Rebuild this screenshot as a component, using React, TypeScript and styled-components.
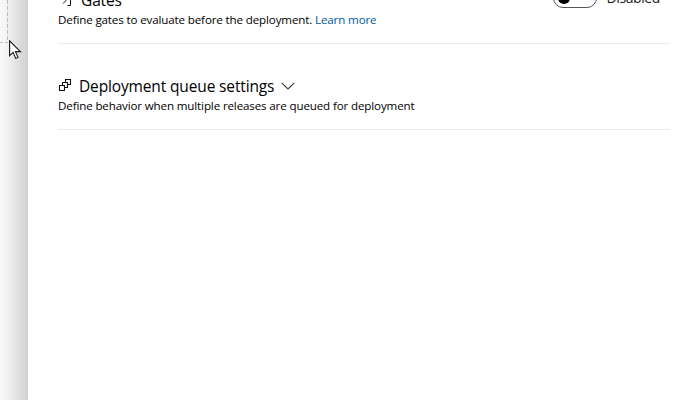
import React from "react";
import styled, { createGlobalStyle } from "styled-components";

const GlobalStyle = createGlobalStyle`
  body { margin: 0; background: #fff; overflow: hidden; }
  * { box-sizing: border-box; }
`;

const Page = styled.div`
  display: flex;
  position: relative;
  width: 696px;
  height: 400px;
  overflow: hidden;
  background: #fff;
  color: #000;
  font-family: "Open Sans", "Noto Sans", sans-serif;
`;

const Canvas = styled.aside`
  flex: 0 0 28px;
  height: 400px;
  background: linear-gradient(90deg, #f8f8f8 0, #f5f5f5 5px, #e8e8e8 13px, #dadada 21px, #d0d0d0 28px);
`;

const Stage = styled.div`
  width: 8px;
  height: 43px;
`;

const Pointer = styled.svg`
  position: absolute;
  left: 9px;
  top: 40px;
`;

const Panel = styled.main`
  flex: 1;
  margin-top: -42px;
  padding: 0 26px 0 30px;
`;

const Section = styled.section`
  height: 86px;
  padding-top: 31px;
  border-bottom: 1px solid #eaeaea;
`;

const Heading = styled.div`
  display: flex;
  align-items: center;
  height: 22px;
`;

const Title = styled.h2<{ $gap: number }>`
  margin: 0 0 0 ${(p) => p.$gap}px;
  font-size: 15.5px;
  line-height: 22px;
  font-weight: 400;
  letter-spacing: -0.14px;
  white-space: nowrap;
`;

const QueueIcon = styled.svg`
  margin-top: -2px;
`;

const Chevron = styled.svg`
  margin-left: 7px;
`;

const Description = styled.p`
  margin: 0;
  font-size: 11.6px;
  line-height: 18px;
  letter-spacing: -0.14px;
  white-space: nowrap;
`;

const Link = styled.a`
  color: #005a9e;
  text-decoration: none;
`;

const ToggleGroup = styled.div`
  display: flex;
  align-items: center;
  margin: -5px 10px 0 auto;
`;

const Toggle = styled.button`
  display: flex;
  align-items: center;
  width: 44px;
  height: 20px;
  margin: 0 10px 0 0;
  padding: 0 4px;
  border: 1px solid #555;
  border-radius: 10px;
  background: #fff;
`;

const Knob = styled.span`
  width: 12px;
  height: 12px;
  border-radius: 50%;
  background: #000;
`;

const ToggleLabel = styled.span`
  font-size: 14px;
  line-height: 20px;
  letter-spacing: -0.4px;
  color: #222;
`;

export default function App() {
  return (
    <Page>
      <GlobalStyle />
      <Canvas>
        <Stage>
          <svg width="8" height="43" fill="none" stroke="#bdbdbd" shapeRendering="crispEdges">
            <path d="M7.5 0V43" strokeDasharray="4 2" />
            <path d="M0 42.5H8" strokeDasharray="3 2" />
          </svg>
        </Stage>
      </Canvas>
      <Panel>
        <Section>
          <Heading>
            <svg width="15" height="16" viewBox="0 0 15 16" fill="none" stroke="#111">
              <path d="M3.5 5V1.5H12.5V13.5H9.5M5 11.5L8 8.5M5 5L8 8.5" />
            </svg>
            <Title $gap={8}>Gates</Title>
            <ToggleGroup>
              <Toggle role="switch" aria-checked="false" aria-label="Gates">
                <Knob />
              </Toggle>
              <ToggleLabel>Disabled</ToggleLabel>
            </ToggleGroup>
          </Heading>
          <Description>
            Define gates to evaluate before the deployment. <Link>Learn more</Link>
          </Description>
        </Section>
        <Section>
          <Heading>
            <QueueIcon width="14" height="14" viewBox="0 0 14 14" fill="#fff" stroke="#111" strokeWidth="1.1">
              <path d="M7.5 1.5H12.5V6.5H7.5Z" />
              <path d="M4.5 4.5H9.5V9.5H4.5Z" />
              <path d="M1.5 7.5H6.5V12.5H1.5Z" />
            </QueueIcon>
            <Title $gap={7}>Deployment queue settings</Title>
            <Chevron width="14" height="8" fill="none" stroke="#463535" strokeWidth="1.1">
              <path d="M0.7 0.8L7 7L13.3 0.8" />
            </Chevron>
          </Heading>
          <Description>
            Define behavior when multiple releases are queued for deployment
          </Description>
        </Section>
      </Panel>
      <Pointer width="13" height="20" fill="#fff" stroke="#15151f" strokeWidth="1.1">
        <path d="M0.6 0.8V15.7L4.1 12.4L6.7 18.4L9 17.4L6.5 11.6H11.4Z" />
      </Pointer>
    </Page>
  );
}
